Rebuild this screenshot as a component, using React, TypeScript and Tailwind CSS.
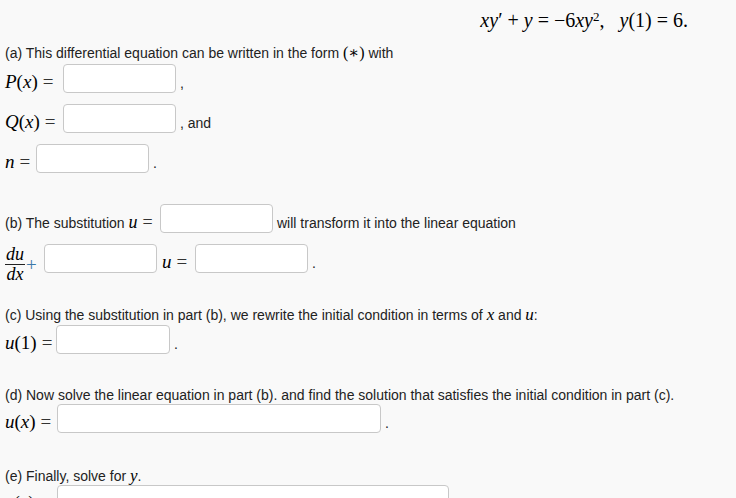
import React from 'react';

const serif = { fontFamily: '"Liberation Serif", "DejaVu Serif", serif' };

function V({ children }: { children: React.ReactNode }) {
  return <i className="italic">{children}</i>;
}

function Eq() {
  return <span className="mx-[5px] text-[#333]">=</span>;
}

function Box({ w }: { w: string }) {
  return (
    <input
      type="text"
      className={`${w} h-[29px] shrink-0 rounded-[4px] border border-[#c8c8c8] bg-white outline-none`}
    />
  );
}

function Row({ mt, children }: { mt: string; children: React.ReactNode }) {
  return <div className={`flex items-end h-[29px] ${mt}`}>{children}</div>;
}

function MathLabel({ w, children }: { w: string; children: React.ReactNode }) {
  return (
    <span className={`${w} shrink-0 whitespace-nowrap text-[19px] leading-[19px] mb-[2px] text-black`} style={serif}>
      {children}
    </span>
  );
}

function After({ children }: { children: React.ReactNode }) {
  return <span className="ml-[4px] mb-[2px] leading-[16px] whitespace-nowrap">{children}</span>;
}

export default function App() {
  return (
    <div
      className="h-[498px] w-[736px] overflow-hidden bg-[#f9f9f9] pl-[5px] text-[14px] text-[#222]"
      style={{ fontFamily: '"Liberation Sans", Arial, sans-serif' }}
    >
      <div className="flex justify-end pr-[48px] mt-[9px] h-[23px] text-[20px] leading-[23px] text-black" style={serif}>
        <span className="whitespace-nowrap">
          <V>xy</V>′ + <V>y</V> = −6<V>xy</V>
          <sup className="text-[13px]">2</sup>,&nbsp;&nbsp;&nbsp;<V>y</V>(1) = 6.
        </span>
      </div>

      <p className="mt-[13px] leading-[16px]">
        (a) This differential equation can be written in the form{' '}
        <span className="text-[16px] text-black" style={serif}>(∗)</span> with
      </p>
      <Row mt="mt-[3px]">
        <MathLabel w="w-[58px]">
          <V>P</V>(<V>x</V>)<Eq />
        </MathLabel>
        <Box w="w-[113px]" />
        <After>,</After>
      </Row>
      <Row mt="mt-[11px]">
        <MathLabel w="w-[58px]">
          <V>Q</V>(<V>x</V>)<Eq />
        </MathLabel>
        <Box w="w-[113px]" />
        <After>, and</After>
      </Row>
      <Row mt="mt-[11px]">
        <MathLabel w="w-[31px]">
          <V>n</V>
          <Eq />
        </MathLabel>
        <Box w="w-[113px]" />
        <After>.</After>
      </Row>

      <Row mt="mt-[31px]">
        <span className="w-[155px] shrink-0 whitespace-nowrap mb-[2px] leading-[16px]">
          (b) The substitution{' '}
          <span className="text-[18px] text-black" style={serif}>
            <V>u</V>
            <Eq />
          </span>
        </span>
        <Box w="w-[113px]" />
        <After>will transform it into the linear equation</After>
      </Row>
      <Row mt="mt-[11px]">
        <span className="flex w-[39px] shrink-0 self-start mt-[2px] items-center text-black" style={serif}>
          <span className="flex flex-col items-center text-[18px] leading-[17px]">
            <span className="px-[1px]">
              <V>du</V>
            </span>
            <span className="h-px w-full bg-[#222] my-[1px]" />
            <span className="px-[1px]">
              <V>dx</V>
            </span>
          </span>
          <span className="ml-[1px] mt-[2px] text-[19px] text-[#3b78a8]">+</span>
        </span>
        <Box w="w-[113px]" />
        <MathLabel w="w-[38px] pl-[5px]">
          <V>u</V>
          <Eq />
        </MathLabel>
        <Box w="w-[113px]" />
        <After>.</After>
      </Row>

      <p className="mt-[34px] leading-[16px]">
        (c) Using the substitution in part (b), we rewrite the initial condition in terms of{' '}
        <span className="text-[17px] text-black" style={serif}>
          <V>x</V>
        </span>{' '}
        and{' '}
        <span className="text-[17px] text-black" style={serif}>
          <V>u</V>
        </span>
        :
      </p>
      <Row mt="mt-[2px]">
        <MathLabel w="w-[51px]">
          <V>u</V>(1)
          <Eq />
        </MathLabel>
        <Box w="w-[114px]" />
        <After>.</After>
      </Row>

      <p className="mt-[33px] leading-[16px]">
        (d) Now solve the linear equation in part (b). and find the solution that satisfies the initial condition in part (c).
      </p>
      <Row mt="mt-[1px]">
        <MathLabel w="w-[52px]">
          <V>u</V>(<V>x</V>)<Eq />
        </MathLabel>
        <Box w="w-[324px]" />
        <After>.</After>
      </Row>

      <p className="mt-[35px] leading-[16px]">
        (e) Finally, solve for{' '}
        <span className="text-[17px] text-black" style={serif}>
          <V>y</V>
        </span>
        .
      </p>
      <Row mt="mt-[1px]">
        <MathLabel w="w-[52px]">
          <V>y</V>(<V>x</V>)<Eq />
        </MathLabel>
        <Box w="w-[392px]" />
        <After>.</After>
      </Row>
    </div>
  );
}
